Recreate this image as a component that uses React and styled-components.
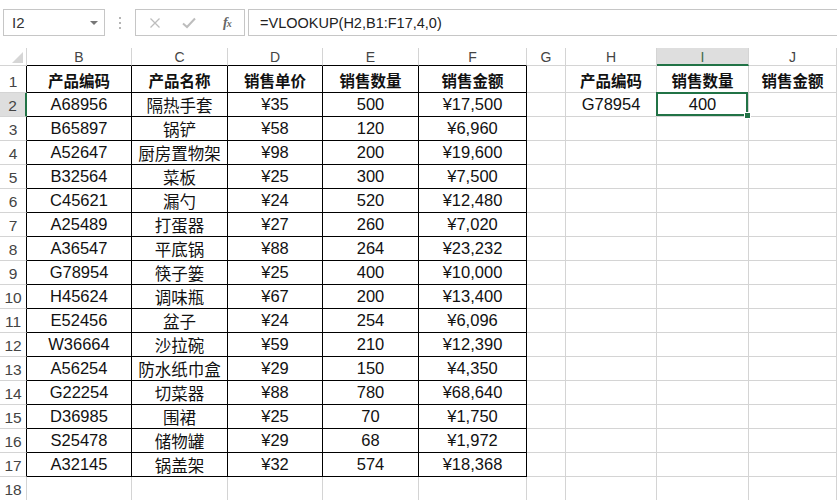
import React from "react";
import styled, { createGlobalStyle } from "styled-components";

const GlobalStyle = createGlobalStyle`
  html, body {
    margin: 0;
    padding: 0;
    background: #fff;
  }
  body {
    width: 837px;
    height: 500px;
    overflow: hidden;
    font-family: "Liberation Sans", "Noto Sans CJK SC", sans-serif;
  }
`;

const GREEN = "#217346";
const GRID = "#d4d4d4";

const COLUMNS = ["B", "C", "D", "E", "F", "G", "H", "I", "J"];
const WIDTHS = [27, 105, 96, 95, 96, 108, 39, 91, 92];

const rows = [
  ["产品编码", "产品名称", "销售单价", "销售数量", "销售金额"],
  ["A68956", "隔热手套", "¥35", "500", "¥17,500"],
  ["B65897", "锅铲", "¥58", "120", "¥6,960"],
  ["A52647", "厨房置物架", "¥98", "200", "¥19,600"],
  ["B32564", "菜板", "¥25", "300", "¥7,500"],
  ["C45621", "漏勺", "¥24", "520", "¥12,480"],
  ["A25489", "打蛋器", "¥27", "260", "¥7,020"],
  ["A36547", "平底锅", "¥88", "264", "¥23,232"],
  ["G78954", "筷子篓", "¥25", "400", "¥10,000"],
  ["H45624", "调味瓶", "¥67", "200", "¥13,400"],
  ["E52456", "盆子", "¥24", "254", "¥6,096"],
  ["W36664", "沙拉碗", "¥59", "210", "¥12,390"],
  ["A56254", "防水纸巾盒", "¥29", "150", "¥4,350"],
  ["G22254", "切菜器", "¥88", "780", "¥68,640"],
  ["D36985", "围裙", "¥25", "70", "¥1,750"],
  ["S25478", "储物罐", "¥29", "68", "¥1,972"],
  ["A32145", "锅盖架", "¥32", "574", "¥18,368"],
];

const lookup = {
  1: ["产品编码", "销售数量", "销售金额"],
  2: ["G78954", "400", ""],
};

const Page = styled.div`
  width: 837px;
  height: 500px;
  display: flex;
  flex-direction: column;
  overflow: hidden;
`;

const FormulaBar = styled.div`
  height: 48px;
  flex-shrink: 0;
  display: flex;
  align-items: flex-start;
  padding: 9px 0 0 3px;
  box-sizing: border-box;
`;

const NameBox = styled.div`
  width: 102px;
  height: 27px;
  box-sizing: border-box;
  border: 1px solid #c6c6c6;
  display: flex;
  align-items: center;
  justify-content: space-between;
  padding: 0 6px 0 8px;
  font-size: 15px;
  color: #333;
`;

const DropArrow = styled.span`
  width: 0;
  height: 0;
  border-left: 4px solid transparent;
  border-right: 4px solid transparent;
  border-top: 4px solid #777;
`;

const Grip = styled.div`
  width: 30px;
  height: 27px;
  display: flex;
  flex-direction: column;
  align-items: center;
  justify-content: center;
  gap: 3px;

  span {
    width: 2px;
    height: 2px;
    background: #b5b5b5;
  }
`;

const ButtonBox = styled.div`
  width: 110px;
  height: 27px;
  box-sizing: border-box;
  border: 1px solid #c6c6c6;
  display: flex;
  align-items: center;
  padding-left: 13px;
  gap: 21px;
`;

const Fx = styled.span`
  font-family: "Liberation Serif", "DejaVu Serif", serif;
  font-style: italic;
  font-weight: 700;
  font-size: 14px;
  color: #666;
  margin-left: 6px;
  letter-spacing: -1px;

  small {
    font-size: 10px;
  }
`;

const FormulaInput = styled.div`
  flex: 1;
  height: 27px;
  margin-left: 3px;
  box-sizing: border-box;
  border: 1px solid #c6c6c6;
  border-right: none;
  display: flex;
  align-items: center;
  padding-left: 11px;
  font-size: 14.5px;
  color: #222;
`;

const Sheet = styled.div`
  display: grid;
  grid-template-columns: ${WIDTHS.map((w) => `${w}px`).join(" ")} 1fr;
  grid-template-rows: 18px 27px repeat(16, 24px) 24px;
`;

const ColHead = styled.div`
  box-sizing: border-box;
  border-right: 1px solid ${GRID};
  border-bottom: ${(p) => (p.$active ? `2px solid ${GREEN}` : `1px solid ${p.$edge ? "#000" : GRID}`)};
  background: ${(p) => (p.$active ? "#dedede" : "#fff")};
  display: flex;
  align-items: center;
  justify-content: center;
  font-size: 14px;
  color: ${(p) => (p.$active ? "#3c6a4c" : "#444")};
  padding-top: 1px;
`;

const Corner = styled.div`
  box-sizing: border-box;
  border-right: 1px solid ${GRID};
  border-bottom: 1px solid ${GRID};
  display: flex;
  align-items: flex-end;
  justify-content: flex-end;
  padding: 0 3px 2px 0;
`;

const RowHead = styled.div`
  box-sizing: border-box;
  border-right: ${(p) => (p.$active ? `2px solid ${GREEN}` : `1px solid ${p.$edge ? "#000" : GRID}`)};
  border-bottom: 1px solid ${GRID};
  background: ${(p) => (p.$active ? "#dedede" : "#fff")};
  display: flex;
  align-items: flex-end;
  justify-content: center;
  padding-bottom: 1px;
  font-size: 15.5px;
  color: #444;
`;

const Cell = styled.div`
  position: relative;
  box-sizing: border-box;
  border-right: 1px solid ${(p) => (p.$table ? "#000" : GRID)};
  border-bottom: 1px solid ${(p) => (p.$table ? "#000" : GRID)};
  display: flex;
  align-items: center;
  justify-content: center;
  font-size: ${(p) => (p.$bold ? "15.5px" : "16.5px")};
  font-weight: ${(p) => (p.$bold ? 700 : 400)};
  color: #111;
  white-space: nowrap;
  padding-top: ${(p) => (p.$bold ? "2px" : "0")};

  ${(p) =>
    p.$selected &&
    `
    &::after {
      content: "";
      position: absolute;
      top: -1px;
      left: -1px;
      right: 0;
      bottom: 0;
      border: 2px solid ${GREEN};
    }
    &::before {
      content: "";
      position: absolute;
      right: -3px;
      bottom: -3px;
      width: 5px;
      height: 5px;
      background: ${GREEN};
      border: 1px solid #fff;
      z-index: 2;
    }
  `}
`;

const CrossIcon = () => (
  <svg width="12" height="12" viewBox="0 0 12 12">
    <path d="M1.5 1.5 L10.5 10.5 M10.5 1.5 L1.5 10.5" stroke="#bdbdbd" strokeWidth="1.3" />
  </svg>
);

const CheckIcon = () => (
  <svg width="14" height="12" viewBox="0 0 14 12">
    <path d="M1 6.5 L5 10 L13 1.5" stroke="#bdbdbd" strokeWidth="2" fill="none" />
  </svg>
);

const CornerMark = () => (
  <svg width="11" height="11" viewBox="0 0 11 11">
    <path d="M11 0 L11 11 L0 11 Z" fill="#d6d6d6" />
  </svg>
);

function renderRow(r) {
  const data = rows[r - 1];
  const right = lookup[r] || ["", "", ""];
  const cells = [];
  data.forEach((v, i) => {
    cells.push(
      <Cell key={`t${i}`} $table $bold={r === 1}>
        {v}
      </Cell>
    );
  });
  cells.push(<Cell key="g" />);
  right.forEach((v, i) => {
    cells.push(
      <Cell key={`r${i}`} $bold={r === 1} $selected={r === 2 && i === 1}>
        {v}
      </Cell>
    );
  });
  return cells;
}

export default function App() {
  return (
    <Page>
      <GlobalStyle />
      <FormulaBar>
        <NameBox>
          <span>I2</span>
          <DropArrow />
        </NameBox>
        <Grip>
          <span />
          <span />
          <span />
        </Grip>
        <ButtonBox>
          <CrossIcon />
          <CheckIcon />
          <Fx>
            f<small>x</small>
          </Fx>
        </ButtonBox>
        <FormulaInput>=VLOOKUP(H2,B1:F17,4,0)</FormulaInput>
      </FormulaBar>

      <Sheet>
        <Corner>
          <CornerMark />
        </Corner>
        {COLUMNS.map((c, i) => (
          <ColHead key={c} $edge={i < 5} $active={c === "I"}>
            {c}
          </ColHead>
        ))}

        {rows.map((_, idx) => {
          const r = idx + 1;
          return (
            <React.Fragment key={r}>
              <RowHead $edge $active={r === 2}>
                {r}
              </RowHead>
              {renderRow(r)}
            </React.Fragment>
          );
        })}

        <RowHead>18</RowHead>
        {COLUMNS.map((c) => (
          <Cell key={c} />
        ))}
      </Sheet>
    </Page>
  );
}
